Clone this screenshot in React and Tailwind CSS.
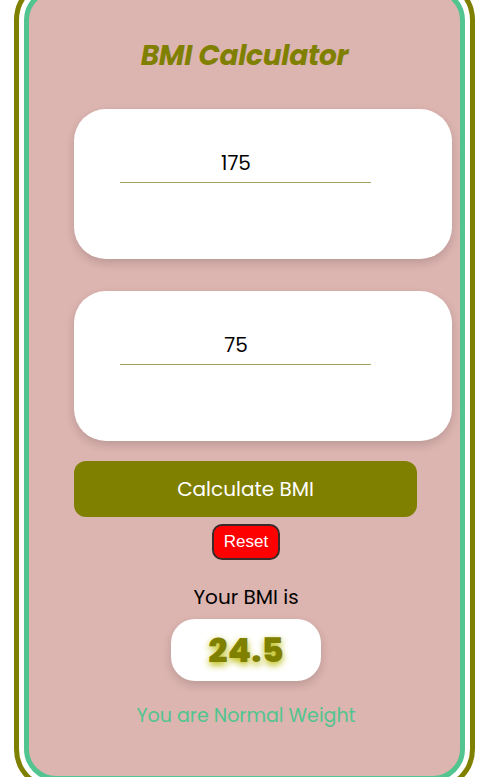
const olive = "#808000";

const InputCard = ({ value }) => {
    return (
        <div className="ml-[45px] w-[378px] h-[150px] bg-white rounded-[32px] shadow-[0_4px_10px_rgba(0,0,0,0.15)] pt-[34px]">
            <input
                type="text"
                defaultValue={value}
                className="ml-[46px] w-[251px] h-[40px] pr-[19px] border-b border-[#a3a35a] text-center text-[20px] text-black outline-none bg-transparent"
            />
        </div>
    );
};

export default function App() {
    return (
        <div className="bg-white min-h-[777px] overflow-hidden font-['Poppins','Open_Sans',sans-serif]">
            {/* olive outer frame */}
            <div className="ml-[14px] mt-[-22px] w-[461px] border-[5px] border-[#808000] rounded-[42px] p-[5px]">
                {/* green inner frame */}
                <div className="border-[5px] border-[#52c48f] rounded-[32px] bg-[#dcb4b0] pt-[42px] pb-[45px]">
                    <h1 className="text-center text-[28px] leading-[42px] font-bold italic text-[#808000] tracking-[-0.3px]">
                        BMI Calculator
                    </h1>

                    <div className="mt-[32px] flex flex-col gap-[32px]">
                        <InputCard value="175" />
                        <InputCard value="75" />
                    </div>

                    <button className="mt-[20px] ml-[45px] w-[343px] h-[56px] rounded-[12px] bg-[#808000] text-white text-[20px]">
                        Calculate BMI
                    </button>

                    <div className="mt-[7px] flex justify-center pl-[3px]">
                        <button className="w-[68px] h-[36px] rounded-[10px] bg-[#ff0000] border-2 border-[#3a2a2a] text-white text-[17px] font-['Liberation_Sans',Arial,sans-serif]">
                            Reset
                        </button>
                    </div>

                    <p className="mt-[22px] text-center text-[20px] leading-[30px] text-black pl-[3px]">
                        Your BMI is
                    </p>

                    <div className="mt-[7px] flex justify-center pl-[3px]">
                        <div className="w-[150px] h-[62px] bg-white rounded-[24px] shadow-[0_4px_10px_rgba(0,0,0,0.15)] flex items-center justify-center">
                            <span className="text-[34px] font-extrabold text-[#808000] [text-shadow:0_3px_7px_#b8b800]" style={{ color: olive }}>
                                24.5
                            </span>
                        </div>
                    </div>

                    <p className="mt-[20px] text-center text-[19px] leading-[30px] text-[#52c48f] pl-[3px]">
                        You are Normal Weight
                    </p>
                </div>
            </div>
        </div>
    );
}
